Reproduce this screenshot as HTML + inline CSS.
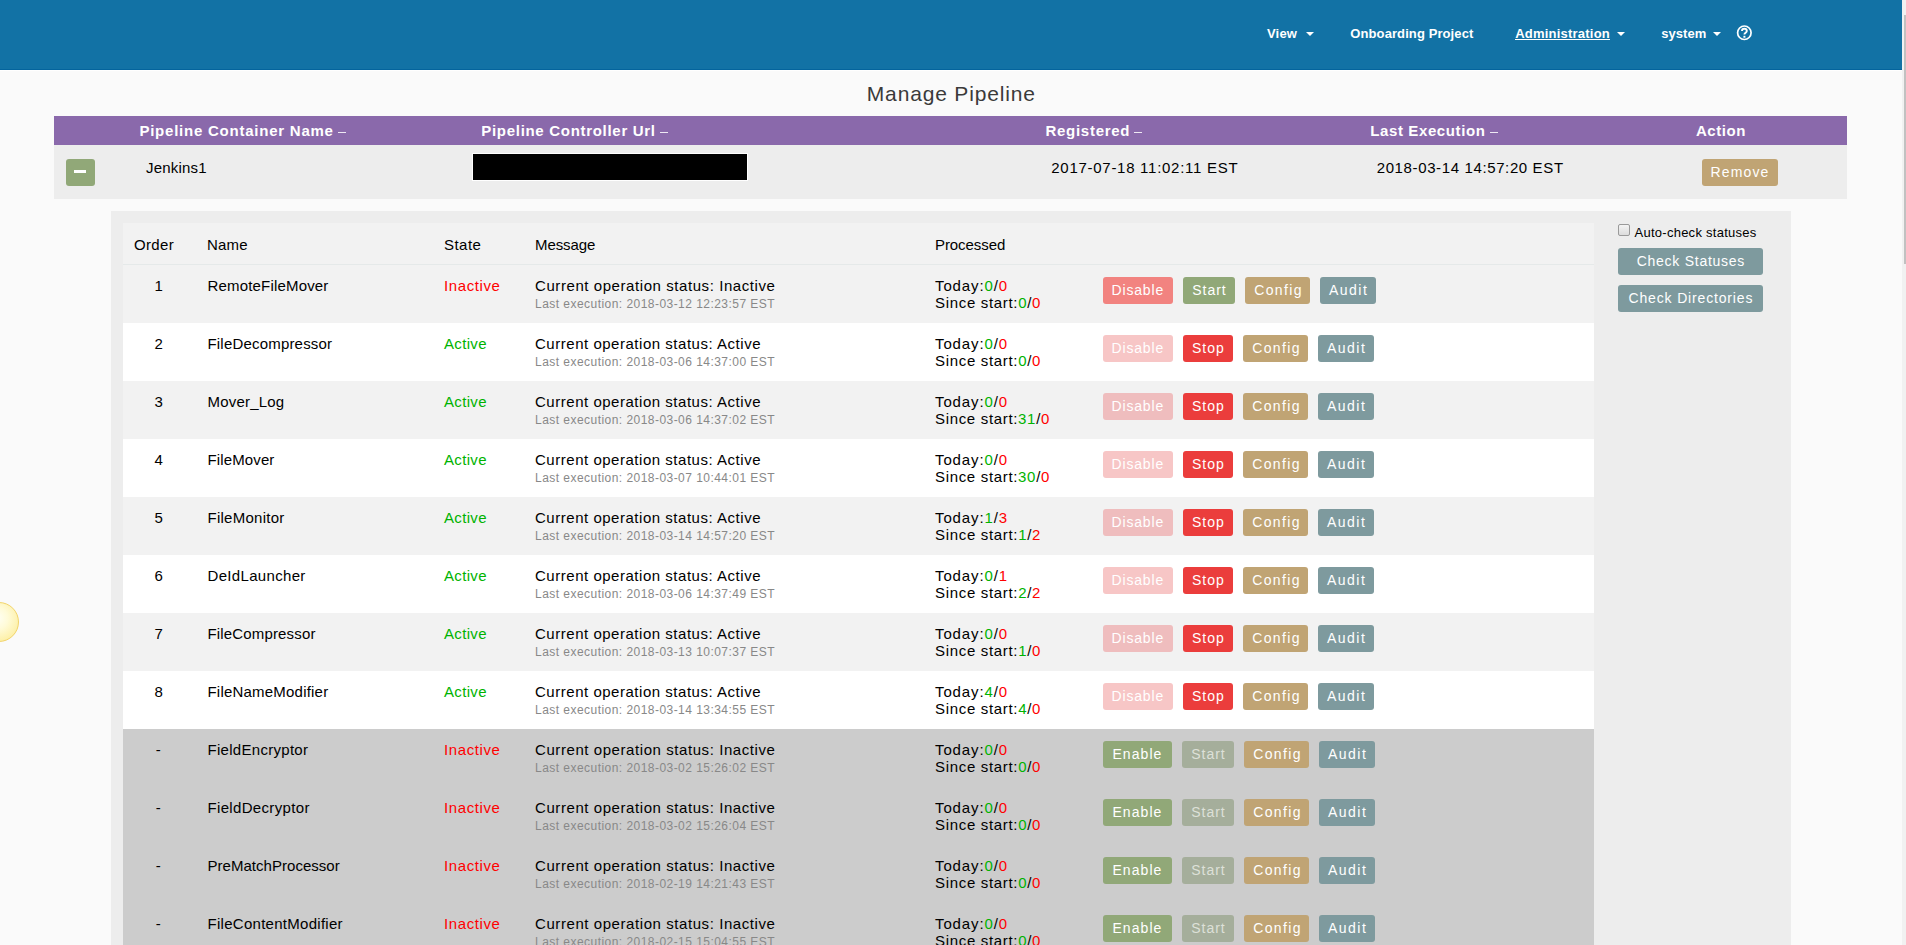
<!DOCTYPE html>
<html><head><meta charset="utf-8"><title>Manage Pipeline</title>
<style>
html,body{margin:0;padding:0}
body{width:1906px;height:945px;overflow:hidden;position:relative;background:#fafafa;font-family:"Liberation Sans",sans-serif}
.r{position:absolute}
.t{position:absolute;white-space:nowrap}
.caret{position:absolute;width:0;height:0;border-top:4px solid #fff;border-left:4px solid transparent;border-right:4px solid transparent}
.cb{position:absolute;width:10px;height:10px;border:1px solid #9a9a9a;border-radius:2px;background:linear-gradient(#f4f4f4,#dcdcdc);box-sizing:content-box}
.sun{position:absolute;left:-21px;top:602px;width:38px;height:38px;border-radius:50%;border:1px solid #f2d46a;background:radial-gradient(circle at 45% 40%,#fffff4 0%,#fffbd8 35%,#fdf0a8 75%,#f8e07c 100%)}
</style></head><body>
<div class="r" style="left:0px;top:0px;width:1902px;height:69px;background:#1272a5;"></div>
<div class="r" style="left:0px;top:69px;width:1902px;height:1px;background:#04649d;"></div>
<div class="r" style="left:0px;top:70px;width:1902px;height:1px;background:#ffffff;"></div>
<div class="r" style="left:1902px;top:0px;width:4px;height:945px;background:#f1f1f1;"></div>
<div class="r" style="left:1904px;top:15px;width:2px;height:249px;background:#c1c1c1;"></div>
<div class="t" style="left:1267.00px;top:25.90px;font-size:13px;line-height:15px;letter-spacing:0.174px;font-weight:700;color:#fff;">View</div>
<div class="caret" style="left:1306px;top:32px"></div>
<div class="t" style="left:1350.30px;top:25.90px;font-size:13px;line-height:15px;letter-spacing:0.099px;font-weight:700;color:#fff;">Onboarding Project</div>
<div class="t" style="left:1515.20px;top:25.90px;font-size:13px;line-height:15px;letter-spacing:0.217px;font-weight:700;color:#fff;">Administration</div>
<div class="r" style="left:1515px;top:39px;width:95px;height:1px;background:#fff;"></div>
<div class="caret" style="left:1617px;top:32px"></div>
<div class="t" style="left:1661.20px;top:25.90px;font-size:13px;line-height:15px;letter-spacing:0.070px;font-weight:700;color:#fff;">system</div>
<div class="caret" style="left:1713px;top:32px"></div>
<svg class="r" style="left:1736px;top:24px" width="18" height="18" viewBox="0 0 18 18"><circle cx="8.35" cy="8.75" r="6.75" fill="none" stroke="#fff" stroke-width="1.7"/><path d="M6 7.1 C6 5.6 7 4.8 8.35 4.8 C9.8 4.8 10.8 5.7 10.8 7 C10.8 8.7 8.4 8.9 8.4 10.6" fill="none" stroke="#fff" stroke-width="1.9" stroke-linecap="butt"/><rect x="7.4" y="11.8" width="2" height="1.9" fill="#fff"/></svg>
<div class="t" style="left:866.80px;top:81.92px;font-size:21px;line-height:24px;letter-spacing:0.831px;font-weight:400;color:#3a3a3a;">Manage Pipeline</div>
<div class="r" style="left:54px;top:116px;width:1793px;height:29px;background:#8a69ab;"></div>
<div class="t" style="left:139.40px;top:122.20px;font-size:15px;line-height:17px;letter-spacing:0.766px;font-weight:700;color:#fff;">Pipeline Container Name</div>
<div class="r" style="left:338px;top:132px;width:8px;height:1px;background:rgba(255,255,255,.85);"></div>
<div class="t" style="left:481.30px;top:122.20px;font-size:15px;line-height:17px;letter-spacing:0.698px;font-weight:700;color:#fff;">Pipeline Controller Url</div>
<div class="r" style="left:660px;top:132px;width:8px;height:1px;background:rgba(255,255,255,.85);"></div>
<div class="t" style="left:1045.50px;top:122.20px;font-size:15px;line-height:17px;letter-spacing:0.715px;font-weight:700;color:#fff;">Registered</div>
<div class="r" style="left:1134px;top:132px;width:8px;height:1px;background:rgba(255,255,255,.85);"></div>
<div class="t" style="left:1370.30px;top:122.20px;font-size:15px;line-height:17px;letter-spacing:0.609px;font-weight:700;color:#fff;">Last Execution</div>
<div class="r" style="left:1490px;top:132px;width:8px;height:1px;background:rgba(255,255,255,.85);"></div>
<div class="t" style="left:1696.00px;top:122.20px;font-size:15px;line-height:17px;letter-spacing:0.532px;font-weight:700;color:#fff;">Action</div>
<div class="r" style="left:54px;top:145px;width:1793px;height:54px;background:#ededed;"></div>
<div class="r" style="left:66px;top:159px;width:29px;height:27px;background:#91a878;border-radius:3px;"></div>
<div class="r" style="left:74px;top:170px;width:12px;height:3px;background:#fff;"></div>
<div class="t" style="left:146.00px;top:159.00px;font-size:15px;line-height:17px;letter-spacing:0.195px;font-weight:400;color:#000;">Jenkins1</div>
<div class="r" style="left:472px;top:153px;width:276px;height:28px;background:#fff;"></div>
<div class="r" style="left:473px;top:154px;width:274px;height:26px;background:#000;"></div>
<div class="t" style="left:1051.30px;top:159.30px;font-size:15px;line-height:17px;letter-spacing:0.721px;font-weight:400;color:#000;">2017-07-18 11:02:11 EST</div>
<div class="t" style="left:1376.70px;top:158.80px;font-size:15px;line-height:17px;letter-spacing:0.624px;font-weight:400;color:#000;">2018-03-14 14:57:20 EST</div>
<div class="r" style="left:1702px;top:159px;width:76px;height:27px;background:#c0a474;border-radius:3px;"></div>
<div class="t" style="left:1710.45px;top:164.15px;font-size:14px;line-height:16px;letter-spacing:1.151px;font-weight:400;color:#fff;">Remove</div>
<div class="r" style="left:111px;top:211px;width:1680px;height:740px;background:#ededed;"></div>
<div class="r" style="left:123px;top:223px;width:1471px;height:42px;background:#f2f2f2;"></div>
<div class="r" style="left:123px;top:264px;width:1471px;height:1px;background:#e5e9e9;"></div>
<div class="t" style="left:134.00px;top:235.90px;font-size:15px;line-height:17px;letter-spacing:0.340px;font-weight:400;color:#000;">Order</div>
<div class="t" style="left:207.00px;top:235.90px;font-size:15px;line-height:17px;letter-spacing:0.210px;font-weight:400;color:#000;">Name</div>
<div class="t" style="left:444.00px;top:235.90px;font-size:15px;line-height:17px;letter-spacing:0.468px;font-weight:400;color:#000;">State</div>
<div class="t" style="left:535.00px;top:235.90px;font-size:15px;line-height:17px;letter-spacing:-0.093px;font-weight:400;color:#000;">Message</div>
<div class="t" style="left:935.00px;top:235.90px;font-size:15px;line-height:17px;letter-spacing:-0.073px;font-weight:400;color:#000;">Processed</div>
<div class="r" style="left:123px;top:265px;width:1471px;height:58px;background:#f2f2f2;"></div>
<div class="t" style="left:154.45px;top:277.30px;font-size:15px;line-height:17px;letter-spacing:0.562px;font-weight:400;color:#000;">1</div>
<div class="t" style="left:207.50px;top:277.30px;font-size:15px;line-height:17px;letter-spacing:0.178px;font-weight:400;color:#000;">RemoteFileMover</div>
<div class="t" style="left:444.00px;top:277.30px;font-size:15px;line-height:17px;letter-spacing:0.594px;font-weight:400;color:#ff0000;">Inactive</div>
<div class="t" style="left:535.00px;top:277.30px;font-size:15px;line-height:17px;letter-spacing:0.574px;font-weight:400;color:#000;">Current operation status: Inactive</div>
<div class="t" style="left:535.00px;top:296.84px;font-size:12px;line-height:14px;letter-spacing:0.459px;font-weight:400;color:#888;">Last execution: 2018-03-12 12:23:57 EST</div>
<div class="t" style="left:935px;top:277.30px;font-size:15px;line-height:17px;letter-spacing:0.891px;color:#000">Today:<span style="color:#00b300">0</span>/<span style="color:#ff0000">0</span></div>
<div class="t" style="left:935px;top:294.30px;font-size:15px;line-height:17px;letter-spacing:0.680px;color:#000">Since start:<span style="color:#00b300">0</span>/<span style="color:#ff0000">0</span></div>
<div class="r" style="left:1103px;top:277px;width:70px;height:27px;background:#f28380;border-radius:3px;"></div>
<div class="t" style="left:1111.60px;top:282.15px;font-size:14px;line-height:16px;letter-spacing:0.816px;font-weight:400;color:#fff;">Disable</div>
<div class="r" style="left:1183px;top:277px;width:52px;height:27px;background:#91a878;border-radius:3px;"></div>
<div class="t" style="left:1192.25px;top:282.15px;font-size:14px;line-height:16px;letter-spacing:0.956px;font-weight:400;color:#fff;">Start</div>
<div class="r" style="left:1245px;top:277px;width:65px;height:27px;background:#c0a474;border-radius:3px;"></div>
<div class="t" style="left:1254.15px;top:282.15px;font-size:14px;line-height:16px;letter-spacing:1.403px;font-weight:400;color:#fff;">Config</div>
<div class="r" style="left:1320px;top:277px;width:56px;height:27px;background:#7e9a9e;border-radius:3px;"></div>
<div class="t" style="left:1329.05px;top:282.15px;font-size:14px;line-height:16px;letter-spacing:1.470px;font-weight:400;color:#fff;">Audit</div>
<div class="r" style="left:123px;top:323px;width:1471px;height:58px;background:#ffffff;"></div>
<div class="t" style="left:154.45px;top:335.30px;font-size:15px;line-height:17px;letter-spacing:0.562px;font-weight:400;color:#000;">2</div>
<div class="t" style="left:207.50px;top:335.30px;font-size:15px;line-height:17px;letter-spacing:0.189px;font-weight:400;color:#000;">FileDecompressor</div>
<div class="t" style="left:444.00px;top:335.30px;font-size:15px;line-height:17px;letter-spacing:0.334px;font-weight:400;color:#00b300;">Active</div>
<div class="t" style="left:535.00px;top:335.30px;font-size:15px;line-height:17px;letter-spacing:0.524px;font-weight:400;color:#000;">Current operation status: Active</div>
<div class="t" style="left:535.00px;top:354.84px;font-size:12px;line-height:14px;letter-spacing:0.459px;font-weight:400;color:#888;">Last execution: 2018-03-06 14:37:00 EST</div>
<div class="t" style="left:935px;top:335.30px;font-size:15px;line-height:17px;letter-spacing:0.891px;color:#000">Today:<span style="color:#00b300">0</span>/<span style="color:#ff0000">0</span></div>
<div class="t" style="left:935px;top:352.30px;font-size:15px;line-height:17px;letter-spacing:0.680px;color:#000">Since start:<span style="color:#00b300">0</span>/<span style="color:#ff0000">0</span></div>
<div class="r" style="left:1103px;top:335px;width:70px;height:27px;background:#f7c6c6;border-radius:3px;"></div>
<div class="t" style="left:1111.60px;top:340.15px;font-size:14px;line-height:16px;letter-spacing:0.816px;font-weight:400;color:#fff;">Disable</div>
<div class="r" style="left:1183px;top:335px;width:50px;height:27px;background:#eb3d3c;border-radius:3px;"></div>
<div class="t" style="left:1191.95px;top:340.15px;font-size:14px;line-height:16px;letter-spacing:1.029px;font-weight:400;color:#fff;">Stop</div>
<div class="r" style="left:1243px;top:335px;width:65px;height:27px;background:#c0a474;border-radius:3px;"></div>
<div class="t" style="left:1252.15px;top:340.15px;font-size:14px;line-height:16px;letter-spacing:1.403px;font-weight:400;color:#fff;">Config</div>
<div class="r" style="left:1318px;top:335px;width:56px;height:27px;background:#7e9a9e;border-radius:3px;"></div>
<div class="t" style="left:1327.05px;top:340.15px;font-size:14px;line-height:16px;letter-spacing:1.470px;font-weight:400;color:#fff;">Audit</div>
<div class="r" style="left:123px;top:381px;width:1471px;height:58px;background:#f2f2f2;"></div>
<div class="t" style="left:154.45px;top:393.30px;font-size:15px;line-height:17px;letter-spacing:0.562px;font-weight:400;color:#000;">3</div>
<div class="t" style="left:207.50px;top:393.30px;font-size:15px;line-height:17px;letter-spacing:0.199px;font-weight:400;color:#000;">Mover_Log</div>
<div class="t" style="left:444.00px;top:393.30px;font-size:15px;line-height:17px;letter-spacing:0.334px;font-weight:400;color:#00b300;">Active</div>
<div class="t" style="left:535.00px;top:393.30px;font-size:15px;line-height:17px;letter-spacing:0.524px;font-weight:400;color:#000;">Current operation status: Active</div>
<div class="t" style="left:535.00px;top:412.84px;font-size:12px;line-height:14px;letter-spacing:0.459px;font-weight:400;color:#888;">Last execution: 2018-03-06 14:37:02 EST</div>
<div class="t" style="left:935px;top:393.30px;font-size:15px;line-height:17px;letter-spacing:0.891px;color:#000">Today:<span style="color:#00b300">0</span>/<span style="color:#ff0000">0</span></div>
<div class="t" style="left:935px;top:410.30px;font-size:15px;line-height:17px;letter-spacing:0.672px;color:#000">Since start:<span style="color:#00b300">31</span>/<span style="color:#ff0000">0</span></div>
<div class="r" style="left:1103px;top:393px;width:70px;height:27px;background:#efbdbe;border-radius:3px;"></div>
<div class="t" style="left:1111.60px;top:398.15px;font-size:14px;line-height:16px;letter-spacing:0.816px;font-weight:400;color:#fff;">Disable</div>
<div class="r" style="left:1183px;top:393px;width:50px;height:27px;background:#eb3d3c;border-radius:3px;"></div>
<div class="t" style="left:1191.95px;top:398.15px;font-size:14px;line-height:16px;letter-spacing:1.029px;font-weight:400;color:#fff;">Stop</div>
<div class="r" style="left:1243px;top:393px;width:65px;height:27px;background:#c0a474;border-radius:3px;"></div>
<div class="t" style="left:1252.15px;top:398.15px;font-size:14px;line-height:16px;letter-spacing:1.403px;font-weight:400;color:#fff;">Config</div>
<div class="r" style="left:1318px;top:393px;width:56px;height:27px;background:#7e9a9e;border-radius:3px;"></div>
<div class="t" style="left:1327.05px;top:398.15px;font-size:14px;line-height:16px;letter-spacing:1.470px;font-weight:400;color:#fff;">Audit</div>
<div class="r" style="left:123px;top:439px;width:1471px;height:58px;background:#ffffff;"></div>
<div class="t" style="left:154.45px;top:451.30px;font-size:15px;line-height:17px;letter-spacing:0.562px;font-weight:400;color:#000;">4</div>
<div class="t" style="left:207.50px;top:451.30px;font-size:15px;line-height:17px;letter-spacing:0.126px;font-weight:400;color:#000;">FileMover</div>
<div class="t" style="left:444.00px;top:451.30px;font-size:15px;line-height:17px;letter-spacing:0.334px;font-weight:400;color:#00b300;">Active</div>
<div class="t" style="left:535.00px;top:451.30px;font-size:15px;line-height:17px;letter-spacing:0.524px;font-weight:400;color:#000;">Current operation status: Active</div>
<div class="t" style="left:535.00px;top:470.84px;font-size:12px;line-height:14px;letter-spacing:0.459px;font-weight:400;color:#888;">Last execution: 2018-03-07 10:44:01 EST</div>
<div class="t" style="left:935px;top:451.30px;font-size:15px;line-height:17px;letter-spacing:0.891px;color:#000">Today:<span style="color:#00b300">0</span>/<span style="color:#ff0000">0</span></div>
<div class="t" style="left:935px;top:468.30px;font-size:15px;line-height:17px;letter-spacing:0.672px;color:#000">Since start:<span style="color:#00b300">30</span>/<span style="color:#ff0000">0</span></div>
<div class="r" style="left:1103px;top:451px;width:70px;height:27px;background:#f7c6c6;border-radius:3px;"></div>
<div class="t" style="left:1111.60px;top:456.15px;font-size:14px;line-height:16px;letter-spacing:0.816px;font-weight:400;color:#fff;">Disable</div>
<div class="r" style="left:1183px;top:451px;width:50px;height:27px;background:#eb3d3c;border-radius:3px;"></div>
<div class="t" style="left:1191.95px;top:456.15px;font-size:14px;line-height:16px;letter-spacing:1.029px;font-weight:400;color:#fff;">Stop</div>
<div class="r" style="left:1243px;top:451px;width:65px;height:27px;background:#c0a474;border-radius:3px;"></div>
<div class="t" style="left:1252.15px;top:456.15px;font-size:14px;line-height:16px;letter-spacing:1.403px;font-weight:400;color:#fff;">Config</div>
<div class="r" style="left:1318px;top:451px;width:56px;height:27px;background:#7e9a9e;border-radius:3px;"></div>
<div class="t" style="left:1327.05px;top:456.15px;font-size:14px;line-height:16px;letter-spacing:1.470px;font-weight:400;color:#fff;">Audit</div>
<div class="r" style="left:123px;top:497px;width:1471px;height:58px;background:#f2f2f2;"></div>
<div class="t" style="left:154.45px;top:509.30px;font-size:15px;line-height:17px;letter-spacing:0.562px;font-weight:400;color:#000;">5</div>
<div class="t" style="left:207.50px;top:509.30px;font-size:15px;line-height:17px;letter-spacing:0.261px;font-weight:400;color:#000;">FileMonitor</div>
<div class="t" style="left:444.00px;top:509.30px;font-size:15px;line-height:17px;letter-spacing:0.334px;font-weight:400;color:#00b300;">Active</div>
<div class="t" style="left:535.00px;top:509.30px;font-size:15px;line-height:17px;letter-spacing:0.524px;font-weight:400;color:#000;">Current operation status: Active</div>
<div class="t" style="left:535.00px;top:528.84px;font-size:12px;line-height:14px;letter-spacing:0.459px;font-weight:400;color:#888;">Last execution: 2018-03-14 14:57:20 EST</div>
<div class="t" style="left:935px;top:509.30px;font-size:15px;line-height:17px;letter-spacing:0.891px;color:#000">Today:<span style="color:#00b300">1</span>/<span style="color:#ff0000">3</span></div>
<div class="t" style="left:935px;top:526.30px;font-size:15px;line-height:17px;letter-spacing:0.680px;color:#000">Since start:<span style="color:#00b300">1</span>/<span style="color:#ff0000">2</span></div>
<div class="r" style="left:1103px;top:509px;width:70px;height:27px;background:#efbdbe;border-radius:3px;"></div>
<div class="t" style="left:1111.60px;top:514.15px;font-size:14px;line-height:16px;letter-spacing:0.816px;font-weight:400;color:#fff;">Disable</div>
<div class="r" style="left:1183px;top:509px;width:50px;height:27px;background:#eb3d3c;border-radius:3px;"></div>
<div class="t" style="left:1191.95px;top:514.15px;font-size:14px;line-height:16px;letter-spacing:1.029px;font-weight:400;color:#fff;">Stop</div>
<div class="r" style="left:1243px;top:509px;width:65px;height:27px;background:#c0a474;border-radius:3px;"></div>
<div class="t" style="left:1252.15px;top:514.15px;font-size:14px;line-height:16px;letter-spacing:1.403px;font-weight:400;color:#fff;">Config</div>
<div class="r" style="left:1318px;top:509px;width:56px;height:27px;background:#7e9a9e;border-radius:3px;"></div>
<div class="t" style="left:1327.05px;top:514.15px;font-size:14px;line-height:16px;letter-spacing:1.470px;font-weight:400;color:#fff;">Audit</div>
<div class="r" style="left:123px;top:555px;width:1471px;height:58px;background:#ffffff;"></div>
<div class="t" style="left:154.45px;top:567.30px;font-size:15px;line-height:17px;letter-spacing:0.562px;font-weight:400;color:#000;">6</div>
<div class="t" style="left:207.50px;top:567.30px;font-size:15px;line-height:17px;letter-spacing:0.328px;font-weight:400;color:#000;">DeIdLauncher</div>
<div class="t" style="left:444.00px;top:567.30px;font-size:15px;line-height:17px;letter-spacing:0.334px;font-weight:400;color:#00b300;">Active</div>
<div class="t" style="left:535.00px;top:567.30px;font-size:15px;line-height:17px;letter-spacing:0.524px;font-weight:400;color:#000;">Current operation status: Active</div>
<div class="t" style="left:535.00px;top:586.84px;font-size:12px;line-height:14px;letter-spacing:0.459px;font-weight:400;color:#888;">Last execution: 2018-03-06 14:37:49 EST</div>
<div class="t" style="left:935px;top:567.30px;font-size:15px;line-height:17px;letter-spacing:0.891px;color:#000">Today:<span style="color:#00b300">0</span>/<span style="color:#ff0000">1</span></div>
<div class="t" style="left:935px;top:584.30px;font-size:15px;line-height:17px;letter-spacing:0.680px;color:#000">Since start:<span style="color:#00b300">2</span>/<span style="color:#ff0000">2</span></div>
<div class="r" style="left:1103px;top:567px;width:70px;height:27px;background:#f7c6c6;border-radius:3px;"></div>
<div class="t" style="left:1111.60px;top:572.15px;font-size:14px;line-height:16px;letter-spacing:0.816px;font-weight:400;color:#fff;">Disable</div>
<div class="r" style="left:1183px;top:567px;width:50px;height:27px;background:#eb3d3c;border-radius:3px;"></div>
<div class="t" style="left:1191.95px;top:572.15px;font-size:14px;line-height:16px;letter-spacing:1.029px;font-weight:400;color:#fff;">Stop</div>
<div class="r" style="left:1243px;top:567px;width:65px;height:27px;background:#c0a474;border-radius:3px;"></div>
<div class="t" style="left:1252.15px;top:572.15px;font-size:14px;line-height:16px;letter-spacing:1.403px;font-weight:400;color:#fff;">Config</div>
<div class="r" style="left:1318px;top:567px;width:56px;height:27px;background:#7e9a9e;border-radius:3px;"></div>
<div class="t" style="left:1327.05px;top:572.15px;font-size:14px;line-height:16px;letter-spacing:1.470px;font-weight:400;color:#fff;">Audit</div>
<div class="r" style="left:123px;top:613px;width:1471px;height:58px;background:#f2f2f2;"></div>
<div class="t" style="left:154.45px;top:625.30px;font-size:15px;line-height:17px;letter-spacing:0.562px;font-weight:400;color:#000;">7</div>
<div class="t" style="left:207.50px;top:625.30px;font-size:15px;line-height:17px;letter-spacing:0.158px;font-weight:400;color:#000;">FileCompressor</div>
<div class="t" style="left:444.00px;top:625.30px;font-size:15px;line-height:17px;letter-spacing:0.334px;font-weight:400;color:#00b300;">Active</div>
<div class="t" style="left:535.00px;top:625.30px;font-size:15px;line-height:17px;letter-spacing:0.524px;font-weight:400;color:#000;">Current operation status: Active</div>
<div class="t" style="left:535.00px;top:644.84px;font-size:12px;line-height:14px;letter-spacing:0.459px;font-weight:400;color:#888;">Last execution: 2018-03-13 10:07:37 EST</div>
<div class="t" style="left:935px;top:625.30px;font-size:15px;line-height:17px;letter-spacing:0.891px;color:#000">Today:<span style="color:#00b300">0</span>/<span style="color:#ff0000">0</span></div>
<div class="t" style="left:935px;top:642.30px;font-size:15px;line-height:17px;letter-spacing:0.680px;color:#000">Since start:<span style="color:#00b300">1</span>/<span style="color:#ff0000">0</span></div>
<div class="r" style="left:1103px;top:625px;width:70px;height:27px;background:#efbdbe;border-radius:3px;"></div>
<div class="t" style="left:1111.60px;top:630.15px;font-size:14px;line-height:16px;letter-spacing:0.816px;font-weight:400;color:#fff;">Disable</div>
<div class="r" style="left:1183px;top:625px;width:50px;height:27px;background:#eb3d3c;border-radius:3px;"></div>
<div class="t" style="left:1191.95px;top:630.15px;font-size:14px;line-height:16px;letter-spacing:1.029px;font-weight:400;color:#fff;">Stop</div>
<div class="r" style="left:1243px;top:625px;width:65px;height:27px;background:#c0a474;border-radius:3px;"></div>
<div class="t" style="left:1252.15px;top:630.15px;font-size:14px;line-height:16px;letter-spacing:1.403px;font-weight:400;color:#fff;">Config</div>
<div class="r" style="left:1318px;top:625px;width:56px;height:27px;background:#7e9a9e;border-radius:3px;"></div>
<div class="t" style="left:1327.05px;top:630.15px;font-size:14px;line-height:16px;letter-spacing:1.470px;font-weight:400;color:#fff;">Audit</div>
<div class="r" style="left:123px;top:671px;width:1471px;height:58px;background:#ffffff;"></div>
<div class="t" style="left:154.45px;top:683.30px;font-size:15px;line-height:17px;letter-spacing:0.562px;font-weight:400;color:#000;">8</div>
<div class="t" style="left:207.50px;top:683.30px;font-size:15px;line-height:17px;letter-spacing:0.208px;font-weight:400;color:#000;">FileNameModifier</div>
<div class="t" style="left:444.00px;top:683.30px;font-size:15px;line-height:17px;letter-spacing:0.334px;font-weight:400;color:#00b300;">Active</div>
<div class="t" style="left:535.00px;top:683.30px;font-size:15px;line-height:17px;letter-spacing:0.524px;font-weight:400;color:#000;">Current operation status: Active</div>
<div class="t" style="left:535.00px;top:702.84px;font-size:12px;line-height:14px;letter-spacing:0.459px;font-weight:400;color:#888;">Last execution: 2018-03-14 13:34:55 EST</div>
<div class="t" style="left:935px;top:683.30px;font-size:15px;line-height:17px;letter-spacing:0.891px;color:#000">Today:<span style="color:#00b300">4</span>/<span style="color:#ff0000">0</span></div>
<div class="t" style="left:935px;top:700.30px;font-size:15px;line-height:17px;letter-spacing:0.680px;color:#000">Since start:<span style="color:#00b300">4</span>/<span style="color:#ff0000">0</span></div>
<div class="r" style="left:1103px;top:683px;width:70px;height:27px;background:#f7c6c6;border-radius:3px;"></div>
<div class="t" style="left:1111.60px;top:688.15px;font-size:14px;line-height:16px;letter-spacing:0.816px;font-weight:400;color:#fff;">Disable</div>
<div class="r" style="left:1183px;top:683px;width:50px;height:27px;background:#eb3d3c;border-radius:3px;"></div>
<div class="t" style="left:1191.95px;top:688.15px;font-size:14px;line-height:16px;letter-spacing:1.029px;font-weight:400;color:#fff;">Stop</div>
<div class="r" style="left:1243px;top:683px;width:65px;height:27px;background:#c0a474;border-radius:3px;"></div>
<div class="t" style="left:1252.15px;top:688.15px;font-size:14px;line-height:16px;letter-spacing:1.403px;font-weight:400;color:#fff;">Config</div>
<div class="r" style="left:1318px;top:683px;width:56px;height:27px;background:#7e9a9e;border-radius:3px;"></div>
<div class="t" style="left:1327.05px;top:688.15px;font-size:14px;line-height:16px;letter-spacing:1.470px;font-weight:400;color:#fff;">Audit</div>
<div class="r" style="left:123px;top:729px;width:1471px;height:58px;background:#cccccc;"></div>
<div class="t" style="left:155.72px;top:741.30px;font-size:15px;line-height:17px;letter-spacing:1.361px;font-weight:400;color:#000;">-</div>
<div class="t" style="left:207.50px;top:741.30px;font-size:15px;line-height:17px;letter-spacing:0.291px;font-weight:400;color:#000;">FieldEncryptor</div>
<div class="t" style="left:444.00px;top:741.30px;font-size:15px;line-height:17px;letter-spacing:0.594px;font-weight:400;color:#ff0000;">Inactive</div>
<div class="t" style="left:535.00px;top:741.30px;font-size:15px;line-height:17px;letter-spacing:0.574px;font-weight:400;color:#000;">Current operation status: Inactive</div>
<div class="t" style="left:535.00px;top:760.84px;font-size:12px;line-height:14px;letter-spacing:0.459px;font-weight:400;color:#888;">Last execution: 2018-03-02 15:26:02 EST</div>
<div class="t" style="left:935px;top:741.30px;font-size:15px;line-height:17px;letter-spacing:0.891px;color:#000">Today:<span style="color:#00b300">0</span>/<span style="color:#ff0000">0</span></div>
<div class="t" style="left:935px;top:758.30px;font-size:15px;line-height:17px;letter-spacing:0.680px;color:#000">Since start:<span style="color:#00b300">0</span>/<span style="color:#ff0000">0</span></div>
<div class="r" style="left:1103px;top:741px;width:69px;height:27px;background:#91a878;border-radius:3px;"></div>
<div class="t" style="left:1112.40px;top:746.15px;font-size:14px;line-height:16px;letter-spacing:1.079px;font-weight:400;color:#fff;">Enable</div>
<div class="r" style="left:1182px;top:741px;width:52px;height:27px;background:#a5ae9b;border-radius:3px;"></div>
<div class="t" style="left:1191.15px;top:746.15px;font-size:14px;line-height:16px;letter-spacing:1.006px;font-weight:400;color:#dde0d8;">Start</div>
<div class="r" style="left:1244px;top:741px;width:65px;height:27px;background:#c0a474;border-radius:3px;"></div>
<div class="t" style="left:1253.15px;top:746.15px;font-size:14px;line-height:16px;letter-spacing:1.403px;font-weight:400;color:#fff;">Config</div>
<div class="r" style="left:1319px;top:741px;width:56px;height:27px;background:#7e9a9e;border-radius:3px;"></div>
<div class="t" style="left:1328.05px;top:746.15px;font-size:14px;line-height:16px;letter-spacing:1.470px;font-weight:400;color:#fff;">Audit</div>
<div class="r" style="left:123px;top:787px;width:1471px;height:58px;background:#cccccc;"></div>
<div class="t" style="left:155.72px;top:799.30px;font-size:15px;line-height:17px;letter-spacing:1.361px;font-weight:400;color:#000;">-</div>
<div class="t" style="left:207.50px;top:799.30px;font-size:15px;line-height:17px;letter-spacing:0.334px;font-weight:400;color:#000;">FieldDecryptor</div>
<div class="t" style="left:444.00px;top:799.30px;font-size:15px;line-height:17px;letter-spacing:0.594px;font-weight:400;color:#ff0000;">Inactive</div>
<div class="t" style="left:535.00px;top:799.30px;font-size:15px;line-height:17px;letter-spacing:0.574px;font-weight:400;color:#000;">Current operation status: Inactive</div>
<div class="t" style="left:535.00px;top:818.84px;font-size:12px;line-height:14px;letter-spacing:0.459px;font-weight:400;color:#888;">Last execution: 2018-03-02 15:26:04 EST</div>
<div class="t" style="left:935px;top:799.30px;font-size:15px;line-height:17px;letter-spacing:0.891px;color:#000">Today:<span style="color:#00b300">0</span>/<span style="color:#ff0000">0</span></div>
<div class="t" style="left:935px;top:816.30px;font-size:15px;line-height:17px;letter-spacing:0.680px;color:#000">Since start:<span style="color:#00b300">0</span>/<span style="color:#ff0000">0</span></div>
<div class="r" style="left:1103px;top:799px;width:69px;height:27px;background:#91a878;border-radius:3px;"></div>
<div class="t" style="left:1112.40px;top:804.15px;font-size:14px;line-height:16px;letter-spacing:1.079px;font-weight:400;color:#fff;">Enable</div>
<div class="r" style="left:1182px;top:799px;width:52px;height:27px;background:#a5ae9b;border-radius:3px;"></div>
<div class="t" style="left:1191.15px;top:804.15px;font-size:14px;line-height:16px;letter-spacing:1.006px;font-weight:400;color:#dde0d8;">Start</div>
<div class="r" style="left:1244px;top:799px;width:65px;height:27px;background:#c0a474;border-radius:3px;"></div>
<div class="t" style="left:1253.15px;top:804.15px;font-size:14px;line-height:16px;letter-spacing:1.403px;font-weight:400;color:#fff;">Config</div>
<div class="r" style="left:1319px;top:799px;width:56px;height:27px;background:#7e9a9e;border-radius:3px;"></div>
<div class="t" style="left:1328.05px;top:804.15px;font-size:14px;line-height:16px;letter-spacing:1.470px;font-weight:400;color:#fff;">Audit</div>
<div class="r" style="left:123px;top:845px;width:1471px;height:58px;background:#cccccc;"></div>
<div class="t" style="left:155.72px;top:857.30px;font-size:15px;line-height:17px;letter-spacing:1.361px;font-weight:400;color:#000;">-</div>
<div class="t" style="left:207.50px;top:857.30px;font-size:15px;line-height:17px;letter-spacing:0.033px;font-weight:400;color:#000;">PreMatchProcessor</div>
<div class="t" style="left:444.00px;top:857.30px;font-size:15px;line-height:17px;letter-spacing:0.594px;font-weight:400;color:#ff0000;">Inactive</div>
<div class="t" style="left:535.00px;top:857.30px;font-size:15px;line-height:17px;letter-spacing:0.574px;font-weight:400;color:#000;">Current operation status: Inactive</div>
<div class="t" style="left:535.00px;top:876.84px;font-size:12px;line-height:14px;letter-spacing:0.459px;font-weight:400;color:#888;">Last execution: 2018-02-19 14:21:43 EST</div>
<div class="t" style="left:935px;top:857.30px;font-size:15px;line-height:17px;letter-spacing:0.891px;color:#000">Today:<span style="color:#00b300">0</span>/<span style="color:#ff0000">0</span></div>
<div class="t" style="left:935px;top:874.30px;font-size:15px;line-height:17px;letter-spacing:0.680px;color:#000">Since start:<span style="color:#00b300">0</span>/<span style="color:#ff0000">0</span></div>
<div class="r" style="left:1103px;top:857px;width:69px;height:27px;background:#91a878;border-radius:3px;"></div>
<div class="t" style="left:1112.40px;top:862.15px;font-size:14px;line-height:16px;letter-spacing:1.079px;font-weight:400;color:#fff;">Enable</div>
<div class="r" style="left:1182px;top:857px;width:52px;height:27px;background:#a5ae9b;border-radius:3px;"></div>
<div class="t" style="left:1191.15px;top:862.15px;font-size:14px;line-height:16px;letter-spacing:1.006px;font-weight:400;color:#dde0d8;">Start</div>
<div class="r" style="left:1244px;top:857px;width:65px;height:27px;background:#c0a474;border-radius:3px;"></div>
<div class="t" style="left:1253.15px;top:862.15px;font-size:14px;line-height:16px;letter-spacing:1.403px;font-weight:400;color:#fff;">Config</div>
<div class="r" style="left:1319px;top:857px;width:56px;height:27px;background:#7e9a9e;border-radius:3px;"></div>
<div class="t" style="left:1328.05px;top:862.15px;font-size:14px;line-height:16px;letter-spacing:1.470px;font-weight:400;color:#fff;">Audit</div>
<div class="r" style="left:123px;top:903px;width:1471px;height:58px;background:#cccccc;"></div>
<div class="t" style="left:155.72px;top:915.30px;font-size:15px;line-height:17px;letter-spacing:1.361px;font-weight:400;color:#000;">-</div>
<div class="t" style="left:207.50px;top:915.30px;font-size:15px;line-height:17px;letter-spacing:0.280px;font-weight:400;color:#000;">FileContentModifier</div>
<div class="t" style="left:444.00px;top:915.30px;font-size:15px;line-height:17px;letter-spacing:0.594px;font-weight:400;color:#ff0000;">Inactive</div>
<div class="t" style="left:535.00px;top:915.30px;font-size:15px;line-height:17px;letter-spacing:0.574px;font-weight:400;color:#000;">Current operation status: Inactive</div>
<div class="t" style="left:535.00px;top:934.84px;font-size:12px;line-height:14px;letter-spacing:0.459px;font-weight:400;color:#888;">Last execution: 2018-02-15 15:04:55 EST</div>
<div class="t" style="left:935px;top:915.30px;font-size:15px;line-height:17px;letter-spacing:0.891px;color:#000">Today:<span style="color:#00b300">0</span>/<span style="color:#ff0000">0</span></div>
<div class="t" style="left:935px;top:932.30px;font-size:15px;line-height:17px;letter-spacing:0.680px;color:#000">Since start:<span style="color:#00b300">0</span>/<span style="color:#ff0000">0</span></div>
<div class="r" style="left:1103px;top:915px;width:69px;height:27px;background:#91a878;border-radius:3px;"></div>
<div class="t" style="left:1112.40px;top:920.15px;font-size:14px;line-height:16px;letter-spacing:1.079px;font-weight:400;color:#fff;">Enable</div>
<div class="r" style="left:1182px;top:915px;width:52px;height:27px;background:#a5ae9b;border-radius:3px;"></div>
<div class="t" style="left:1191.15px;top:920.15px;font-size:14px;line-height:16px;letter-spacing:1.006px;font-weight:400;color:#dde0d8;">Start</div>
<div class="r" style="left:1244px;top:915px;width:65px;height:27px;background:#c0a474;border-radius:3px;"></div>
<div class="t" style="left:1253.15px;top:920.15px;font-size:14px;line-height:16px;letter-spacing:1.403px;font-weight:400;color:#fff;">Config</div>
<div class="r" style="left:1319px;top:915px;width:56px;height:27px;background:#7e9a9e;border-radius:3px;"></div>
<div class="t" style="left:1328.05px;top:920.15px;font-size:14px;line-height:16px;letter-spacing:1.470px;font-weight:400;color:#fff;">Audit</div>
<div class="cb" style="left:1618px;top:224px"></div>
<div class="t" style="left:1634.50px;top:224.70px;font-size:13px;line-height:15px;letter-spacing:0.261px;font-weight:400;color:#000;">Auto-check statuses</div>
<div class="r" style="left:1618px;top:248px;width:145px;height:27px;background:#7e9a9e;border-radius:3px;"></div>
<div class="t" style="left:1636.65px;top:253.15px;font-size:14px;line-height:16px;letter-spacing:0.742px;font-weight:400;color:#fff;">Check Statuses</div>
<div class="r" style="left:1618px;top:285px;width:145px;height:27px;background:#7e9a9e;border-radius:3px;"></div>
<div class="t" style="left:1628.55px;top:290.15px;font-size:14px;line-height:16px;letter-spacing:0.839px;font-weight:400;color:#fff;">Check Directories</div>
<div class="sun"></div>
</body></html>
